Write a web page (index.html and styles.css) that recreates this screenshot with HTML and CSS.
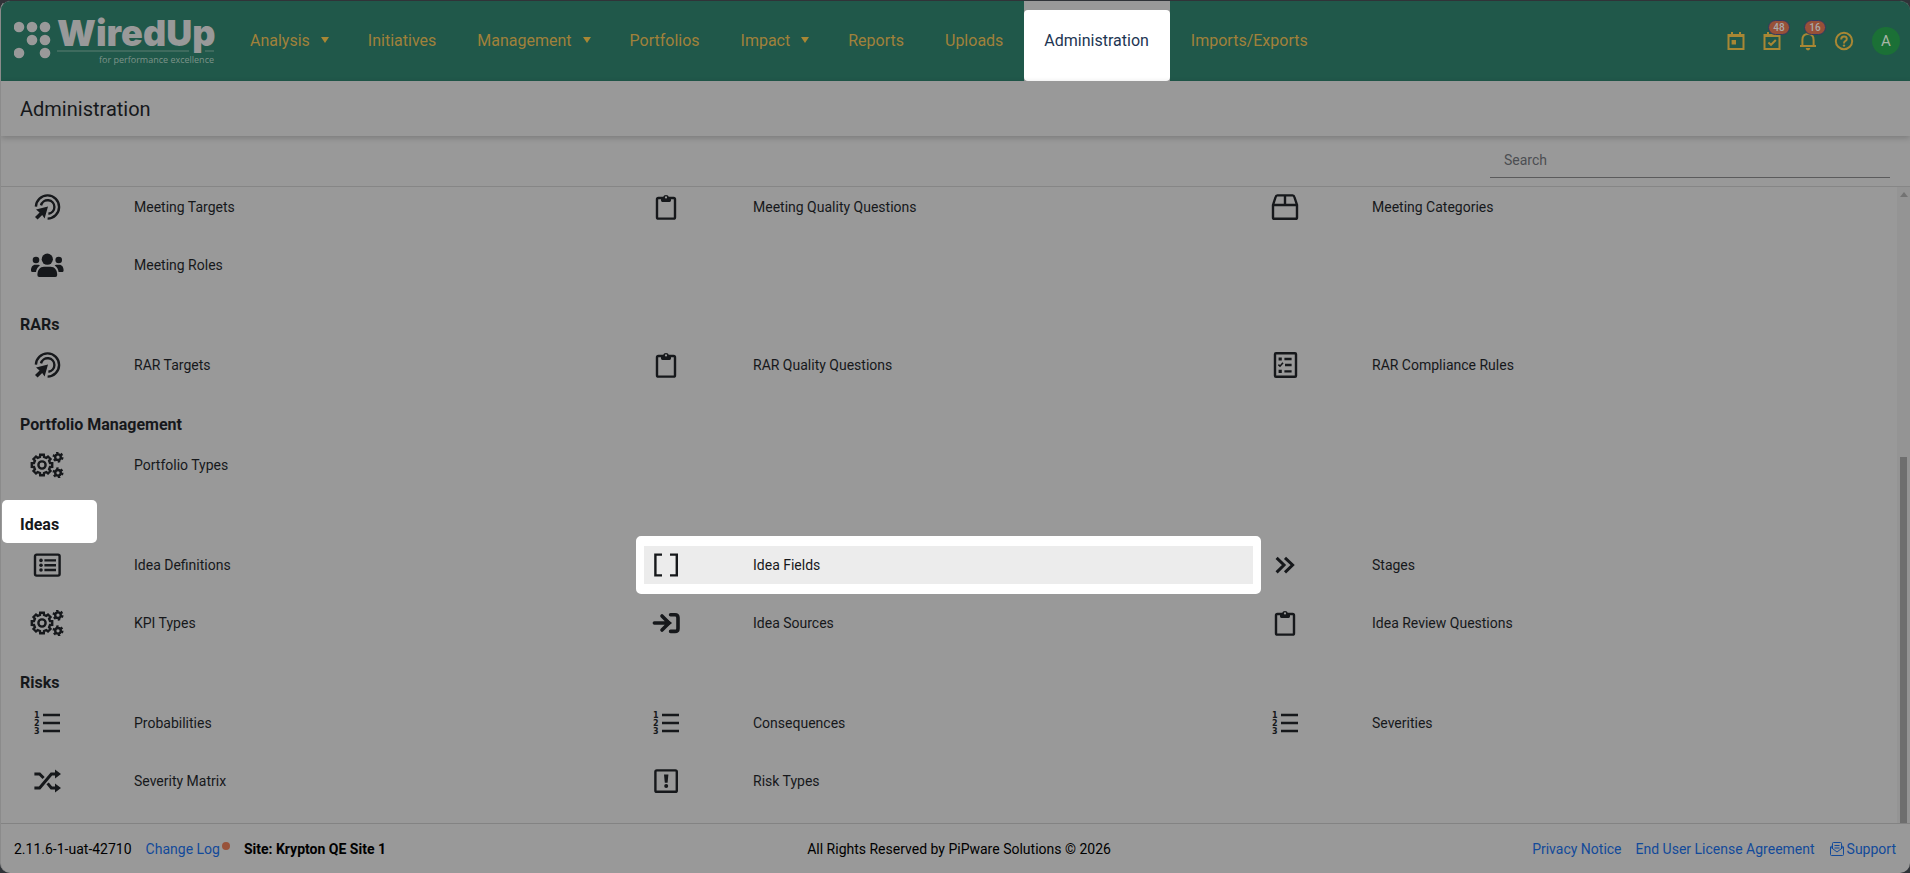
FILE: index.html
```html
<!DOCTYPE html>
<html lang="en">
  <head>
    <meta charset="utf-8">
    <title>WiredUp - Administration</title>
    <link rel="stylesheet" href="styles.css">
  </head>
  <body>

    <!-- icon set -->
    <svg class="iconSet" width="0" height="0">
      <symbol id="target" viewBox="0 0 34 26">
        <path class="line" d="M5.9 12.6A11.6 11.6 0 1 1 17.6 24.6"/>
        <path class="line" d="M11 11.4A6.8 6.8 0 1 1 18.4 19.8"/>
        <path class="solid" d="M18 12.4L6 15.5L9.6 18.4L5 23L7.6 25.6L12.2 21L14.6 24.6Z"/>
      </symbol>
      <symbol id="users" viewBox="0 0 34 26">
        <circle class="solid" cx="17.3" cy="7.2" r="5.6"/>
        <circle class="solid" cx="6" cy="8" r="3.3"/>
        <circle class="solid" cx="28.7" cy="8" r="3.3"/>
        <path class="solid" d="M7.4 23C7.4 18 10 14.8 14 14.8H20.6C24.6 14.8 27.2 18 27.2 23Q27.2 25 25.4 25H9.2Q7.4 25 7.4 23Z"/>
        <path class="solid" d="M1 18.6C1 15 2.6 12.8 5.4 12.8H8.6L10 13.6C7.6 15 6.4 17.2 6 20H2Q1 20 1 18.6Z"/>
        <path class="solid" d="M33.6 18.6C33.6 15 32 12.8 29.2 12.8H26L24.6 13.6C27 15 28.2 17.2 28.6 20H32.6Q33.6 20 33.6 18.6Z"/>
      </symbol>
      <symbol id="clipboard" viewBox="0 0 34 26">
        <rect class="line" x="8" y="4" width="18" height="20.6" rx="1.4"/>
        <path class="solid" d="M12 3.4H14A3.1 3.1 0 0 1 20 3.4H22V6.6Q22 8 20.6 8H13.4Q12 8 12 6.6Z"/>
        <circle class="hole" cx="17" cy="3.4" r="1.1"/>
      </symbol>
      <symbol id="box" viewBox="0 0 34 26">
        <path class="line" d="M5 11L7.6 3Q8 1.4 9.4 1.4H24.6Q26 1.4 26.4 3L29 11V23.4Q29 24.8 27.6 24.8H6.4Q5 24.8 5 23.4ZM5 11H29M17 1.4V11"/>
      </symbol>
      <symbol id="checklist" viewBox="0 0 34 26">
        <rect class="line" x="7" y="1.2" width="21" height="23.6" rx="1"/>
        <path class="line" d="M16.4 7H23.6M17 13H23.6M16.4 19.4H23.6"/>
        <path class="thin" d="M10.4 12.6L12 14.2L15 10.8"/>
        <path class="solid" d="M10.6 5.4H13.8V8.6H10.6ZM10.6 17.8H13.8V21H10.6Z"/>
      </symbol>
      <symbol id="cogs" viewBox="0 0 34 26">
        <g transform="translate(12 13)">
          <path class="line" d="M8 -2L10.2 -1.8L10.2 1.8L8 2L7.1 4.3L8.5 6L6 8.5L4.3 7.1L2 8L1.8 10.2L-1.8 10.2L-2 8L-4.3 7.1L-6 8.5L-8.5 6L-7.1 4.3L-8 2L-10.2 1.8L-10.2 -1.8L-8 -2L-7.1 -4.3L-8.5 -6L-6 -8.5L-4.3 -7.1L-2 -8L-1.8 -10.2L1.8 -10.2L2 -8L4.3 -7.1L6 -8.5L8.5 -6L7.1 -4.3Z"/>
          <circle class="line" r="3.6"/>
        </g>
        <circle class="line" cx="28" cy="5.2" r="2.8"/>
        <circle class="teeth" cx="28" cy="5.2" r="4.3"/>
        <circle class="line" cx="28" cy="20.8" r="2.8"/>
        <circle class="teeth" cx="28" cy="20.8" r="4.3"/>
      </symbol>
      <symbol id="listbox" viewBox="0 0 34 26">
        <rect class="line" x="5" y="2.6" width="24.6" height="21" rx="1.6"/>
        <path class="line" d="M14.4 8.4H26M14.4 13.2H26M14.4 18H26"/>
        <circle class="solid" cx="11" cy="8.4" r="1.8"/>
        <circle class="solid" cx="11" cy="13.2" r="1.8"/>
        <circle class="solid" cx="11" cy="18" r="1.8"/>
      </symbol>
      <symbol id="brackets" viewBox="0 0 34 26">
        <path class="line" d="M13 2.6H6.4V23.4H13M21 2.6H27.8V23.4H21"/>
      </symbol>
      <symbol id="chevrons" viewBox="0 0 34 26">
        <path class="mid" d="M8.6 5.8L16 13L8.6 20.4M17 5.8L24.6 13L17 20.4"/>
      </symbol>
      <symbol id="enter" viewBox="0 0 34 26">
        <path class="bold" d="M5.4 13H19.6M13 6L20 13L13 20"/>
        <path class="solid" d="M16 8L23 13L16 18Z"/>
        <path class="bold" d="M21.6 4.8H26Q29 4.8 29 7.8V18.4Q29 21.4 26 21.4H21.6"/>
      </symbol>
      <symbol id="shuffle" viewBox="0 0 34 26">
        <path class="mid" d="M4.4 6H9.6L13.6 10M4.4 20H9.6L21.4 6H26M17.6 15.4L21.4 20H26"/>
        <path class="solid" d="M25 1.4L31 6L25 10.6ZM25 15.4L31 20L25 24.6Z"/>
      </symbol>
      <symbol id="alert" viewBox="0 0 34 26">
        <rect class="line" x="6.4" y="2.4" width="21.4" height="21.4" rx="1.4"/>
        <path class="solid" d="M15 6.6H19.4L18.6 14.8H15.8Z"/>
        <circle class="solid" cx="17.2" cy="18" r="2"/>
      </symbol>
    </svg>

    <div class="page">
      <header class="navBar">
        <a class="logo" href="#">
          <svg width="210" height="64" viewBox="0 -8 210 64">
            <g class="dots">
              <circle cx="5" cy="12" r="5.3"/>
              <circle cx="18" cy="12" r="5.3"/>
              <circle cx="31" cy="12" r="5.3"/>
              <circle cx="18" cy="25" r="5.3"/>
              <circle cx="31" cy="25" r="5.3"/>
              <circle cx="5" cy="38" r="5.3"/>
              <circle cx="31" cy="38" r="5.3"/>
            </g>
            <text class="brand" x="43" y="31">WiredUp</text>
            <path class="rule" d="M43 36H175M191 36H200"/>
            <text class="tag" x="200" y="48">for performance excellence</text>
          </svg>
        </a>
        <nav>
          <a class="menu" href="#">Analysis</a>
          <a href="#">Initiatives</a>
          <a class="menu" href="#">Management</a>
          <a href="#">Portfolios</a>
          <a class="menu" href="#">Impact</a>
          <a href="#">Reports</a>
          <a href="#">Uploads</a>
          <a class="active" href="#"><span>Administration</span></a>
          <a href="#">Imports/Exports</a>
        </nav>
        <div class="tools">
          <button type="button" aria-label="Calendar">
            <svg width="20" height="20" viewBox="0 0 20 20">
              <path class="gold" d="M2.5 4H17.5V18H2.5Z"/>
              <path class="goldFill" d="M2 3H18V6H2ZM5 1H7V4H5ZM13 1H15V4H13ZM5.6 9H10V13.4H5.6Z"/>
            </svg>
          </button>
          <button type="button" aria-label="Tasks">
            <svg width="20" height="20" viewBox="0 0 20 20">
              <path class="gold" d="M2.5 4H17.5V18H2.5ZM6.4 11.4L9 13.8L13.8 9"/>
              <path class="goldFill" d="M2 3H18V6H2ZM5 1H7V4H5ZM13 1H15V4H13Z"/>
            </svg>
            <span class="badge">48</span>
          </button>
          <button type="button" aria-label="Notifications">
            <svg width="20" height="20" viewBox="0 0 20 20">
              <path class="gold" d="M2 15H18M4.4 15V9Q4.4 3 10 3Q15.6 3 15.6 9V15"/>
              <path class="goldFill" d="M7.6 17H12.4Q12 19.4 10 19.4Q8 19.4 7.6 17Z"/>
            </svg>
            <span class="badge">16</span>
          </button>
          <button type="button" aria-label="Help">
            <svg width="20" height="20" viewBox="0 0 20 20">
              <circle class="gold" cx="10" cy="10" r="8.2"/>
              <path class="gold" d="M7.2 8.4Q7.2 5.6 10 5.6Q12.8 5.6 12.8 8Q12.8 9.4 11.2 10.2Q10 10.8 10 12.4"/>
              <circle class="goldFill" cx="10" cy="14.6" r="1.2"/>
            </svg>
          </button>
          <button type="button" class="avatar">A</button>
        </div>
      </header>

      <div class="titleBar">
        <h1>Administration</h1>
      </div>

      <div class="searchBar">
        <input type="text" placeholder="Search" aria-label="Search">
      </div>

      <div class="content">
        <main>
          <div class="grid">
            <a href="#"><svg><use href="#target"/></svg>Meeting Targets</a>
            <a href="#"><svg><use href="#clipboard"/></svg>Meeting Quality Questions</a>
            <a href="#"><svg><use href="#box"/></svg>Meeting Categories</a>
            <a href="#"><svg><use href="#users"/></svg>Meeting Roles</a>
          </div>

          <h2>RARs</h2>
          <div class="grid">
            <a href="#"><svg><use href="#target"/></svg>RAR Targets</a>
            <a href="#"><svg><use href="#clipboard"/></svg>RAR Quality Questions</a>
            <a href="#"><svg><use href="#checklist"/></svg>RAR Compliance Rules</a>
          </div>

          <h2>Portfolio Management</h2>
          <div class="grid">
            <a href="#"><svg><use href="#cogs"/></svg>Portfolio Types</a>
          </div>

          <h2><span class="spot">Ideas</span></h2>
          <div class="grid">
            <a href="#"><svg><use href="#listbox"/></svg>Idea Definitions</a>
            <a class="selected" href="#"><svg><use href="#brackets"/></svg>Idea Fields</a>
            <a href="#"><svg><use href="#chevrons"/></svg>Stages</a>
            <a href="#"><svg><use href="#cogs"/></svg>KPI Types</a>
            <a href="#"><svg><use href="#enter"/></svg>Idea Sources</a>
            <a href="#"><svg><use href="#clipboard"/></svg>Idea Review Questions</a>
          </div>

          <h2>Risks</h2>
          <div class="grid">
            <a href="#">
              <svg viewBox="0 0 34 26">
                <path class="line" d="M13 5H30M13 13H30M13 21H30"/>
                <text x="4" y="8">1</text><text x="4" y="16">2</text><text x="4" y="24">3</text>
              </svg>Probabilities</a>
            <a href="#">
              <svg viewBox="0 0 34 26">
                <path class="line" d="M13 5H30M13 13H30M13 21H30"/>
                <text x="4" y="8">1</text><text x="4" y="16">2</text><text x="4" y="24">3</text>
              </svg>Consequences</a>
            <a href="#">
              <svg viewBox="0 0 34 26">
                <path class="line" d="M13 5H30M13 13H30M13 21H30"/>
                <text x="4" y="8">1</text><text x="4" y="16">2</text><text x="4" y="24">3</text>
              </svg>Severities</a>
            <a href="#"><svg><use href="#shuffle"/></svg>Severity Matrix</a>
            <a href="#"><svg><use href="#alert"/></svg>Risk Types</a>
          </div>
        </main>
        <div class="scroll">
          <div class="arrow"></div>
          <div class="thumb"></div>
        </div>
      </div>

      <footer>
        <div class="footPart">
          <span>2.11.6-1-uat-42710</span>
          <a class="changeLog" href="#">Change Log</a>
          <b>Site: Krypton QE Site 1</b>
        </div>
        <div>All Rights Reserved by PiPware Solutions © 2026</div>
        <div class="footPart">
          <a href="#">Privacy Notice</a>
          <a href="#">End User License Agreement</a>
          <a class="support" href="#">
            <svg width="16" height="16" viewBox="0 0 16 16">
              <path d="M1.5 6V13.5Q1.5 14.5 2.5 14.5H13.5Q14.5 14.5 14.5 13.5V6L8 11ZM1.5 6L3.5 4.5V2.5Q3.5 1.5 4.5 1.5H11.5Q12.5 1.5 12.5 2.5V4.5L14.5 6M3.5 4.5V7.5M12.5 4.5V7.5M5.5 4.5H10.5M5.5 7H10.5"/>
            </svg>Support</a>
        </div>
      </footer>
    </div>

  </body>
</html>
```
FILE: styles.css
```css
* {
  box-sizing: border-box;
}
body {
  margin: 0;
  background-color: #303338;
  font-family: Roboto, Arial, sans-serif;
  font-size: 14px;
  color: #16181b;
}
a {
  text-decoration: none;
}
.iconSet {
  position: absolute;
}
.page {
  display: flex;
  flex-direction: column;
  height: 100vh;
  border-top: 1px solid #303338;
  border-left: 1px solid #8b8b8b;
  border-radius: 10px;
  overflow: hidden;
  background-color: #999;
}

/* top bar */
.navBar {
  display: flex;
  flex: none;
  height: 80px;
  padding-right: 10px;
  background-color: #20584a;
}
.logo {
  width: 229px;
  padding: 6px 0 0 13px;
}
.dots {
  fill: #999;
}
.brand {
  font-family: Inter, sans-serif;
  font-size: 36px;
  font-weight: 900;
  fill: #999;
}
.tag {
  font-family: "Open Sans", sans-serif;
  font-size: 9px;
  text-anchor: end;
  fill: #7d9389;
}
.rule {
  stroke: #5c7e73;
}
nav {
  display: flex;
  flex: 1;
  gap: 1px;
}
nav a {
  display: flex;
  align-items: center;
  padding: 0 20px 2px;
  color: #a0813a;
  font-size: 16px;
}
.menu::after {
  content: "";
  margin: 0 -2px 0 11px;
  border: 4px solid transparent;
  border-top: 6px solid #a88734;
  border-bottom: 0;
}
nav .active {
  padding: 9px 0 0;
  background-color: #999;
  color: #1d3552;
}
.active span {
  padding: 0 21px 0 20px;
  height: 71px;
  line-height: 61px;
  border-radius: 4px;
  background-color: #fff;
}
.tools {
  display: flex;
  align-items: center;
  gap: 16px;
}
.tools button {
  position: relative;
  width: 20px;
  height: 20px;
  padding: 0;
  border: 0;
  background: none;
}
.gold {
  fill: none;
  stroke: #a88734;
  stroke-width: 2;
}
.goldFill {
  fill: #a88734;
}
.badge {
  position: absolute;
  left: 6px;
  top: -11px;
  width: 22px;
  height: 15px;
  border: 1px solid #303a62;
  border-radius: 8px;
  background-color: #985038;
  color: #aaa;
  font-family: Roboto, Arial, sans-serif;
  font-size: 10px;
  font-weight: 500;
  line-height: 13px;
  text-align: center;
}
.tools .avatar {
  width: 28px;
  height: 28px;
  margin-left: 2px;
  border-radius: 50%;
  background-color: #1b7036;
  color: #a8b5a8;
  font-family: Roboto, Arial, sans-serif;
  font-size: 15px;
}

.titleBar {
  flex: none;
  height: 55px;
  padding: 0 19px;
  box-shadow: 0 2px 6px rgba(0, 0, 0, 0.2);
}
h1 {
  margin: 0;
  font-size: 20px;
  font-weight: 400;
  line-height: 56px;
}
.searchBar {
  display: flex;
  flex: none;
  justify-content: flex-end;
  height: 51px;
  padding-right: 20px;
  border-bottom: 1px solid #868686;
}
.searchBar input {
  width: 400px;
  height: 42px;
  padding: 6px 14px 0;
  border: 0;
  border-bottom: 1px solid #5b5b5c;
  background: none;
  font-family: Roboto, Arial, sans-serif;
  font-size: 14px;
}
.searchBar input::placeholder {
  color: #4c4e52;
}

/* list of settings */
.content {
  display: flex;
  flex: 1;
  min-height: 0;
}
main {
  flex: 1;
  padding-top: 1px;
  overflow: hidden;
}
h2 {
  margin: 30px 19px 10px;
  font-size: 16px;
  font-weight: 700;
  line-height: 22px;
}
.grid {
  display: grid;
  grid-template-columns: 1fr 1fr 1fr;
  gap: 20px 10px;
  padding: 0 25px 0 24px;
}
.grid a {
  display: flex;
  align-items: center;
  height: 38px;
  color: #16181b;
}
.grid svg {
  width: 34px;
  height: 26px;
  margin: 0 70px 0 5px;
}
.line, .thin, .mid, .bold, .teeth {
  fill: none;
  stroke: #16181b;
  stroke-width: 2.4;
}
.thin {
  stroke-width: 1.6;
}
.mid {
  stroke-width: 3;
}
.bold {
  stroke-width: 3.6;
  stroke-linecap: round;
}
.teeth {
  stroke-dasharray: 2.25;
}
.solid {
  fill: #16181b;
}
.hole {
  fill: #999;
}
.grid text {
  font-family: "DejaVu Sans", sans-serif;
  font-size: 8px;
  font-weight: 700;
  fill: #16181b;
}
/* highlighted tour spots */
.spot, .grid .selected {
  position: relative;
  z-index: 0;
}
.spot::before {
  content: "";
  position: absolute;
  z-index: -1;
  left: -18px;
  top: -15px;
  width: 95px;
  height: 43px;
  border-radius: 5px;
  background-color: #fff;
}
.grid .selected {
  background-color: #ececec;
}
.selected::before {
  content: "";
  position: absolute;
  z-index: -1;
  inset: -10px -8px;
  border: 10px solid #fff;
  border-width: 10px 8px;
  border-radius: 5px;
}

.scroll {
  display: flex;
  flex-direction: column;
  align-items: center;
  width: 13px;
  padding-top: 5px;
  background-color: #949494;
}
.arrow {
  border: 4px solid transparent;
  border-top: 0;
  border-bottom: 5px solid #737373;
}
.thumb {
  width: 7px;
  height: 58%;
  margin-top: auto;
  background-color: #6e6e6e;
}

footer {
  display: flex;
  flex: none;
  justify-content: space-between;
  align-items: center;
  height: 50px;
  padding: 0 14px 0 13px;
  border-top: 1px solid #838383;
  color: #000;
}
.footPart {
  display: flex;
  gap: 14px;
}
footer a {
  color: #124a9a;
}
.changeLog::after {
  content: "";
  display: inline-block;
  width: 8px;
  height: 8px;
  margin-left: 2px;
  border-radius: 50%;
  background-color: #98523a;
  vertical-align: 4px;
}
.support {
  display: flex;
  gap: 2px;
}
.support svg {
  fill: none;
  stroke: #124a9a;
}
```
